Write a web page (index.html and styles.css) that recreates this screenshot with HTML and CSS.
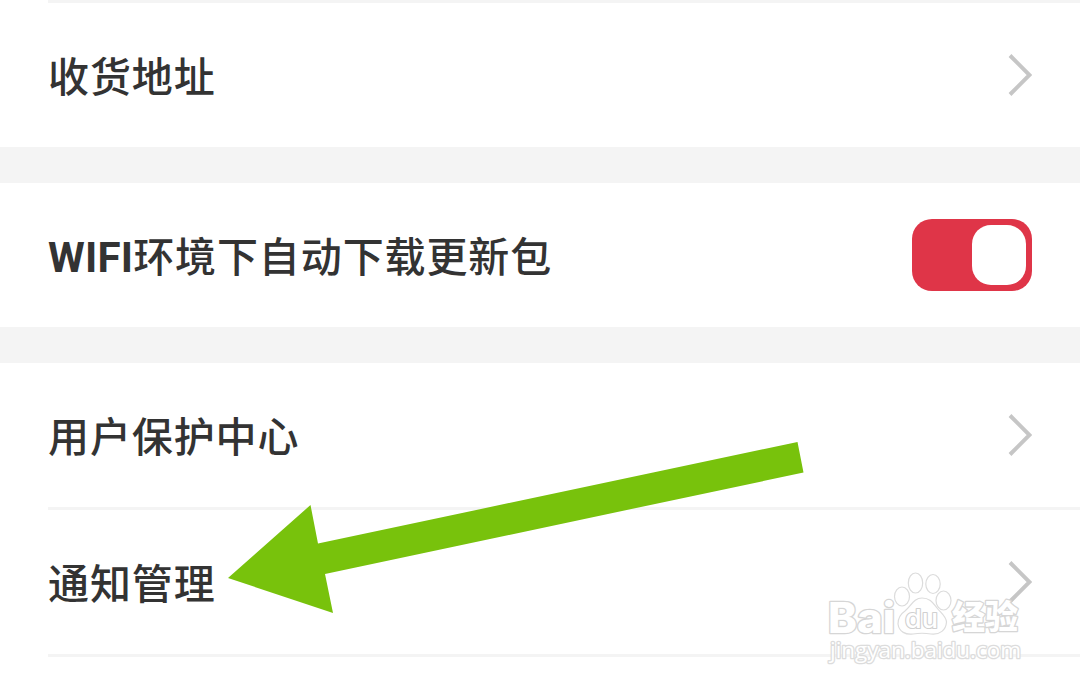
FILE: index.html
```html
<!DOCTYPE html>
<html lang="zh-CN">
<head>
    <meta charset="UTF-8">
    <meta name="viewport" content="width=device-width, initial-scale=1.0">
    <title>设置</title>
    <link rel="stylesheet" href="styles.css">
</head>
<body>

<div class="group group-first">
    <div class="row">
        <span class="label">收货地址</span>
        <svg class="chevron" viewBox="0 0 24 44"><path d="M2 2.5 L21.5 22 L2 41.5"/></svg>
    </div>
</div>

<div class="group">
    <div class="row">
        <span class="label"><b>WIFI</b>环境下自动下载更新包</span>
        <span class="switch"><span class="knob"></span></span>
    </div>
</div>

<div class="group">
    <div class="row">
        <span class="label">用户保护中心</span>
        <svg class="chevron" viewBox="0 0 24 44"><path d="M2 2.5 L21.5 22 L2 41.5"/></svg>
    </div>
    <div class="row divided">
        <span class="label">通知管理</span>
        <svg class="chevron" viewBox="0 0 24 44"><path d="M2 2.5 L21.5 22 L2 41.5"/></svg>
    </div>
    <div class="row divided row-last"></div>
</div>

<svg class="arrow" viewBox="0 0 1080 688"><path d="M228 578 L310.500 505 L318 543.500 L797.500 442 L803.500 472.500 L325 574 L333 613 Z"/></svg>

<svg class="watermark" viewBox="0 0 1080 688">
    <g class="paw">
        <ellipse cx="902" cy="596.500" rx="7.500" ry="9.500"/>
        <ellipse cx="915.500" cy="583" rx="7.200" ry="10"/>
        <ellipse cx="933" cy="584" rx="7.200" ry="9.500"/>
        <ellipse cx="943.500" cy="600.500" rx="7.500" ry="9.500"/>
        <path d="M922 598 C914 598 911 606 905 611 C899 615 898 620 898 624 C899 632 906 635 913 634 C919 633 925 633 931 634 C940 635 946 630 946.500 622 C946 616 941 613 937 608 C933 603 930 598 922 598 Z"/>
    </g>
    <text class="brand" x="828" y="632.500" textLength="67" lengthAdjust="spacingAndGlyphs">Bai</text>
    <text class="du" x="905" y="628" textLength="33" lengthAdjust="spacingAndGlyphs">du</text>
    <text class="name" x="952" y="629" textLength="66">经验</text>
    <text class="site" x="830" y="658" textLength="191" lengthAdjust="spacingAndGlyphs">jingyan.baidu.com</text>
</svg>

</body>
</html>
```

FILE: styles.css
```css
:root {
    --text-color: #333;
    --line-color: #f4f4f4;
    --switch-color: #df3548;
    --arrow-color: #78c20c;
}

* {
    box-sizing: border-box;
}

body {
    position: relative;
    display: flex;
    flex-direction: column;
    gap: 36px;
    height: 688px;
    margin: 0;
    overflow: hidden;
    background-color: var(--line-color);
    color: var(--text-color);
    font-family: Roboto, "Noto Sans CJK SC", sans-serif;
    font-size: 41px;
}

.group {
    background-color: #fff;
}

.group-first {
    padding-top: 3px;
    background: linear-gradient(var(--line-color), var(--line-color)) 48px 0 / 100% 3px no-repeat #fff;
}

.row {
    display: flex;
    align-items: center;
    justify-content: space-between;
    height: 144px;
    padding: 0 48px;
}

.divided {
    height: 147px;
    padding: 0 48px 0 0;
    margin-left: 48px;
    border-top: 3px solid var(--line-color);
}

.row-last {
    height: 34px;
}

.label {
    padding-top: 5px;
    font-weight: 500;
    line-height: 60px;
    letter-spacing: 0.9px;
}

.label b {
    font-size: 42px;
    font-weight: 700;
    letter-spacing: 0.2px;
}

.chevron {
    width: 24px;
    height: 44px;
    fill: none;
    stroke: #c6c6c6;
    stroke-width: 4;
}

.switch {
    display: flex;
    justify-content: flex-end;
    width: 120px;
    height: 72px;
    padding: 6px;
    border-radius: 20px;
    background-color: var(--switch-color);
}

.knob {
    width: 54px;
    height: 60px;
    border-radius: 19px;
    background-color: #fff;
}

.arrow,
.watermark {
    position: absolute;
    top: 0;
    left: 0;
    width: 1080px;
    height: 688px;
}

.arrow {
    fill: var(--arrow-color);
}

.watermark {
    fill: #fff;
    stroke: #dcdcdc;
    stroke-width: 1.2;
    font-family: Inter, "Noto Sans CJK SC", sans-serif;
}

/* outline stays behind the white letter faces */
.watermark text {
    paint-order: stroke;
    stroke-width: 2.6;
    stroke-linejoin: round;
}

.brand {
    font-size: 42px;
    font-weight: 800;
    stroke: #d6d6d6;
}

.watermark .du {
    font-size: 26px;
    font-weight: 500;
    stroke: #d0d0d0;
    stroke-width: 2.2;
}

.name {
    font-size: 33px;
    font-weight: 900;
    stroke: #d6d6d6;
}

.site {
    font-family: "Open Sans", sans-serif;
    font-size: 22px;
    font-weight: 500;
}
```
